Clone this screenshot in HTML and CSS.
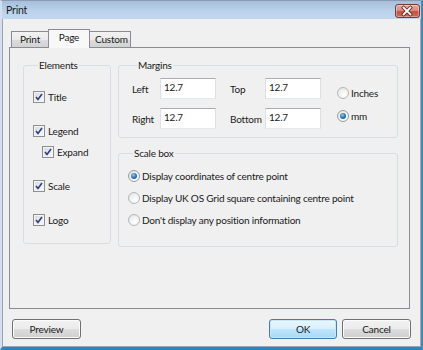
FILE: index.html
```html
<!DOCTYPE html>
<html>
<head>
<meta charset="utf-8">
<link rel="stylesheet" href="styles.css">
</head>
<body>
<div class="window">
  <div class="titlebar">
    <span class="title">Print</span>
    <div class="close">
      <svg width="25" height="14" viewBox="0 0 25 14">
        <path d="M9 3.5 L16 10.5 M16 3.5 L9 10.5" stroke="#5a2018" stroke-width="3.6" stroke-linecap="square" fill="none"/>
        <path d="M9 3.5 L16 10.5 M16 3.5 L9 10.5" stroke="#ffffff" stroke-width="2" stroke-linecap="square" fill="none"/>
      </svg>
    </div>
  </div>
  <div class="client">
    <div class="tabs">
      <div class="tab">Print</div>
      <div class="tab active">Page</div>
      <div class="tab">Custom</div>
    </div>
    <div class="panel">
      <div class="group elements">
        <div class="group-title">Elements</div>
        <div class="checks">
          <div class="check"><span class="cb"><svg width="10" height="10" viewBox="0 0 10 10"><path d="M2 5 L4 7.5 L8 2" stroke="#2b3f86" stroke-width="1.6" fill="none"/></svg></span>Title</div>
          <div class="check-pair">
            <div class="check"><span class="cb"><svg width="10" height="10" viewBox="0 0 10 10"><path d="M2 5 L4 7.5 L8 2" stroke="#2b3f86" stroke-width="1.6" fill="none"/></svg></span>Legend</div>
            <div class="check sub"><span class="cb"><svg width="10" height="10" viewBox="0 0 10 10"><path d="M2 5 L4 7.5 L8 2" stroke="#2b3f86" stroke-width="1.6" fill="none"/></svg></span>Expand</div>
          </div>
          <div class="check"><span class="cb"><svg width="10" height="10" viewBox="0 0 10 10"><path d="M2 5 L4 7.5 L8 2" stroke="#2b3f86" stroke-width="1.6" fill="none"/></svg></span>Scale</div>
          <div class="check"><span class="cb"><svg width="10" height="10" viewBox="0 0 10 10"><path d="M2 5 L4 7.5 L8 2" stroke="#2b3f86" stroke-width="1.6" fill="none"/></svg></span>Logo</div>
        </div>
      </div>
      <div class="rightcol">
        <div class="group margins">
          <div class="group-title">Margins</div>
          <div class="margins-body">
            <div class="mgrid">
              <span class="mlabel">Left</span>
              <input class="field" type="text" value="12.7" readonly>
              <span class="mlabel gap">Top</span>
              <input class="field" type="text" value="12.7" readonly>
              <span class="mlabel">Right</span>
              <input class="field" type="text" value="12.7" readonly>
              <span class="mlabel gap">Bottom</span>
              <input class="field" type="text" value="12.7" readonly>
            </div>
            <div class="units">
              <div class="radio"><span class="rb"></span>Inches</div>
              <div class="radio"><span class="rb on"></span>mm</div>
            </div>
          </div>
        </div>
        <div class="group scalebox">
          <div class="group-title">Scale box</div>
          <div class="radios">
            <div class="radio"><span class="rb on"></span>Display coordinates of centre point</div>
            <div class="radio"><span class="rb"></span>Display UK OS Grid square containing centre point</div>
            <div class="radio"><span class="rb"></span>Don't display any position information</div>
          </div>
        </div>
      </div>
    </div>
    <div class="buttons">
      <div class="btn preview">Preview</div>
      <div class="btn default ok">OK</div>
      <div class="btn cancel">Cancel</div>
    </div>
  </div>
</div>
</body>
</html>
```

FILE: styles.css
```css
* { box-sizing: border-box; }
html, body { margin: 0; padding: 0; }
body {
  width: 423px;
  height: 350px;
  overflow: hidden;
  background: #ffffff;
  font-family: Lato, "Noto Sans", sans-serif;
  font-size: 10px;
  letter-spacing: -0.2px;
  color: #1a1a1a;
}
.window {
  width: 423px;
  height: 350px;
  display: flex;
  flex-direction: column;
  border-top: 1px solid #8b9cb0;
  border-left: 2px solid #d3dfec;
  border-right: 2px solid #3b8bb8;
  border-bottom: 3px solid #2d86b4;
  background: #c0d5ec;
}
.titlebar {
  height: 18px;
  flex: none;
  display: flex;
  align-items: flex-start;
  justify-content: space-between;
  padding: 0 1px 0 4px;
  background: linear-gradient(#a7bfdc 0%, #b3cae5 35%, #bcd3ec 60%, #c1d7ee 100%);
}
.title {
  font-size: 10.5px;
  line-height: 18px;
}
.close {
  width: 25px;
  height: 14px;
  margin-top: 3px;
  border: 1px solid #7c3a31;
  border-radius: 3px;
  background: linear-gradient(#e4a99f 0%, #d98c7f 45%, #c4503f 55%, #cf6a55 100%);
  box-shadow: inset 0 0 0 1px rgba(255,255,255,0.35);
  display: flex;
}
.close svg { margin: -1px 0 0 -1px; }
.client {
  flex: 1;
  display: flex;
  flex-direction: column;
  background: #f0f0f0;
  border-left: 1px solid #98a6b4;
  border-right: 1px solid #a4aab0;
  border-bottom: 1px solid #98a6b4;
  padding: 10px 0 0 6px;
}
.tabs {
  display: flex;
  align-items: flex-end;
  height: 18px;
  padding-left: 2px;
}
.tab {
  height: 16px;
  padding: 0 5px;
  border: 1px solid #898c95;
  border-bottom: none;
  margin-right: -1px;
  background: linear-gradient(#f2f2f2 0%, #ebebeb 50%, #dddddd 51%, #d2d2d2 100%);
  line-height: 15px;
  text-align: center;
}
.tab:nth-child(1) { width: 38px; }
.tab:nth-child(3) { width: 42px; }
.tab.active {
  width: 42px;
  height: 19px;
  margin-bottom: -1px;
  background: #f8f8f8;
  line-height: 14px;
  position: relative;
  z-index: 1;
}
.panel {
  width: 401px;
  height: 262px;
  border: 1px solid #898c95;
  background: #f0f0f0;
  display: flex;
  gap: 7px;
  padding: 17px 0 0 13px;
}
.group {
  border: 1px solid #d5dfe5;
  border-radius: 3px;
  display: flex;
  flex-direction: column;
  align-items: flex-start;
}
.group-title {
  margin: -9px 0 0 5px;
  padding: 0 1px;
  line-height: 16px;
  background: #f0f0f0;
}
.elements {
  width: 88px;
  height: 179px;
  padding-left: 9px;
}
.checks {
  display: flex;
  flex-direction: column;
  gap: 17px;
  margin-top: 15px;
}
.check-pair {
  display: flex;
  flex-direction: column;
  gap: 4px;
}
.check {
  height: 17px;
  display: flex;
  align-items: center;
  gap: 3px;
  white-space: nowrap;
}
.check.sub { margin-left: 9px; }
.cb {
  width: 12px;
  height: 12px;
  flex: none;
  border: 1px solid #8e8f8f;
  background: linear-gradient(135deg, #d6d8dc 0%, #eeeeee 60%, #fbfbfb 100%);
  box-shadow: inset 0 0 0 1px #f4f4f4;
  display: flex;
  align-items: center;
  justify-content: center;
}
.rightcol {
  width: 280px;
  display: flex;
  flex-direction: column;
  gap: 15px;
}
.margins {
  height: 73px;
  padding-left: 13px;
}
.margins-body {
  display: flex;
  margin-top: 5px;
}
.mgrid {
  display: grid;
  grid-template-columns: 28px 56px 49px 56px;
  row-gap: 9px;
  align-items: center;
}
.mlabel.gap { margin-left: 14px; }
.field {
  width: 56px;
  height: 21px;
  margin: 0;
  padding: 0 0 3px 3px;
  border: 1px solid #abadb3;
  border-left-color: #dbdfe6;
  border-right-color: #dbdfe6;
  border-bottom-color: #e3e9ef;
  background: #fff;
  font-family: Lato, "Noto Sans", sans-serif;
  font-size: 10px;
  letter-spacing: -0.2px;
  color: #1a1a1a;
  outline: none;
}
.units {
  display: flex;
  flex-direction: column;
  gap: 8px;
  margin: 7px 0 0 16px;
}
.radio {
  height: 15px;
  display: flex;
  align-items: center;
  gap: 2px;
  white-space: nowrap;
}
.rb {
  width: 12px;
  height: 12px;
  flex: none;
  border-radius: 50%;
  border: 1px solid #b4b6b8;
  background: radial-gradient(circle at 65% 70%, #ffffff 0%, #f0f0f0 55%, #dcdcdc 100%);
  display: flex;
  align-items: center;
  justify-content: center;
}
.rb.on { border-color: #9a9c9e; }
.rb.on::after {
  content: "";
  width: 6px;
  height: 6px;
  border-radius: 50%;
  background: radial-gradient(circle at 40% 35%, #8fd0ff 0%, #2f7fc0 45%, #143c6a 100%);
}
.scalebox {
  height: 94px;
  padding-left: 9px;
}
.radios {
  display: flex;
  flex-direction: column;
  gap: 7px;
  margin-top: 7px;
}
.buttons {
  display: flex;
  width: 402px;
  padding-left: 3px;
  margin-top: 10px;
  gap: 5px;
}
.btn {
  height: 20px;
  border: 1px solid #707070;
  border-radius: 3px;
  background: linear-gradient(#f2f2f2 0%, #ebebeb 50%, #dddddd 51%, #cfcfcf 100%);
  box-shadow: inset 0 0 0 1px #fbfbfb;
  display: flex;
  align-items: center;
  justify-content: center;
  line-height: 1;
}
.preview { width: 69px; }
.ok { width: 68px; margin-left: auto; }
.cancel { width: 69px; }
.btn.default {
  border-color: #3c7fb1;
  background: linear-gradient(#eaf6fd 0%, #d9f0fc 50%, #bee6fd 51%, #a7d9f5 100%);
  box-shadow: inset 0 0 0 1px #c8e6f6;
}
```
